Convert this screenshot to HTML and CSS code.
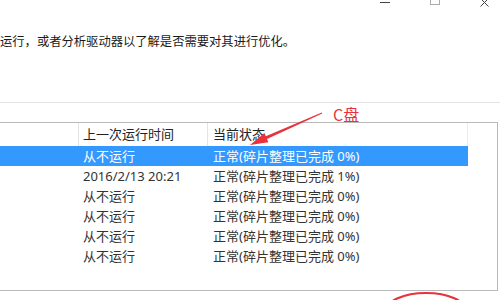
FILE: index.html
```html
<!DOCTYPE html>
<html lang="zh-CN">
<head>
<meta charset="utf-8">
<link rel="stylesheet" href="styles.css">
</head>
<body>
<div class="page">
  <div class="titlebar">
    <svg class="ctl ctl-min" width="12" height="7" viewBox="0 0 12 7"><line x1="1" y1="2.5" x2="11" y2="2.5" stroke="#444" stroke-width="1"/></svg>
    <svg class="ctl ctl-max" width="12" height="7" viewBox="0 0 12 7"><rect x="1.5" y="-5.5" width="9" height="10" fill="none" stroke="#aaa" stroke-width="1"/></svg>
    <svg class="ctl ctl-close" width="12" height="7" viewBox="0 0 12 7"><path d="M1.5 -1.5 L9.5 6.5 M9.5 -1.5 L1.5 6.5" stroke="#444" stroke-width="1"/></svg>
  </div>
  <p class="desc">运行，或者分析驱动器以了解是否需要对其进行优化。</p>
  <div class="rule"></div>
  <div class="listbox">
    <div class="row head">
      <div class="c c1"></div>
      <div class="c c2">上一次运行时间</div>
      <div class="c c3">当前状态</div>
    </div>
    <div class="row sel">
      <div class="c c1"></div>
      <div class="c c2">从不运行</div>
      <div class="c c3">正常(碎片整理已完成 0%)</div>
    </div>
    <div class="row">
      <div class="c c1"></div>
      <div class="c c2">2016/2/13 20:21</div>
      <div class="c c3">正常(碎片整理已完成 1%)</div>
    </div>
    <div class="row">
      <div class="c c1"></div>
      <div class="c c2">从不运行</div>
      <div class="c c3">正常(碎片整理已完成 0%)</div>
    </div>
    <div class="row">
      <div class="c c1"></div>
      <div class="c c2">从不运行</div>
      <div class="c c3">正常(碎片整理已完成 0%)</div>
    </div>
    <div class="row">
      <div class="c c1"></div>
      <div class="c c2">从不运行</div>
      <div class="c c3">正常(碎片整理已完成 0%)</div>
    </div>
    <div class="row">
      <div class="c c1"></div>
      <div class="c c2">从不运行</div>
      <div class="c c3">正常(碎片整理已完成 0%)</div>
    </div>
  </div>
</div>
<div class="note">C盘</div>
<svg class="overlay" width="500" height="300" viewBox="0 0 500 300">
  <polygon points="250,145 268.4,142.3 267,139.1 322.2,113.6 321.8,112.4 265.8,136.3 264.4,133.1" fill="#e8323c"/>
  <ellipse cx="426" cy="311" rx="40" ry="18" fill="none" stroke="#e8323c" stroke-width="2.2"/>
</svg>
</body>
</html>
```

FILE: styles.css
```css
html, body {
  margin: 0;
  padding: 0;
  background: #fff;
  width: 500px;
  height: 300px;
  overflow: hidden;
  font-family: "Noto Sans CJK SC", "Noto Sans", sans-serif;
  color: #222;
}
.page {
  display: flex;
  flex-direction: column;
}
.titlebar {
  height: 7px;
  display: flex;
  justify-content: flex-end;
  align-items: flex-start;
  overflow: hidden;
}
.ctl { display: block; }
.ctl-min { margin-right: 38px; }
.ctl-max { margin-right: 38px; }
.ctl-close { margin-right: 9px; }
.desc {
  margin: 25px 0 0 0;
  font-size: 12.3px;
  line-height: 18px;
  color: #1a1a1a;
  white-space: nowrap;
}
.rule {
  margin-top: 52px;
  height: 1px;
  background: #e3e3e3;
}
.listbox {
  margin-top: 19px;
  width: 497px;
  height: 167px;
  border: 1px solid #b9b9b9;
  border-left: none;
  font-size: 13px;
  color: #333;
  font-family: "Noto Sans", "Noto Sans CJK SC", sans-serif;
}
.row {
  display: flex;
  width: 468px;
  height: 20px;
  line-height: 20px;
}
.row.head {
  height: 23px;
  line-height: 23px;
  color: #222;
}
.row.head .c1,
.row.head .c2 {
  border-right: 1px solid #e4e4e4;
}
.row.head .c3 {
  border-right: 1px solid #ececec;
}
.c { white-space: nowrap; overflow: hidden; box-sizing: border-box; }
.c1 { width: 79px; }
.c2 { width: 129px; padding-left: 4px; }
.c3 { width: 260px; padding-left: 5px; }
.row.sel {
  background: #3399ff;
  color: #fff;
}
.note {
  position: absolute;
  left: 333px;
  top: 104px;
  font-size: 16px;
  line-height: 20px;
  color: #e8323c;
  font-family: "Noto Sans CJK SC", sans-serif;
}
.overlay {
  position: absolute;
  left: 0;
  top: 0;
  pointer-events: none;
}
```
